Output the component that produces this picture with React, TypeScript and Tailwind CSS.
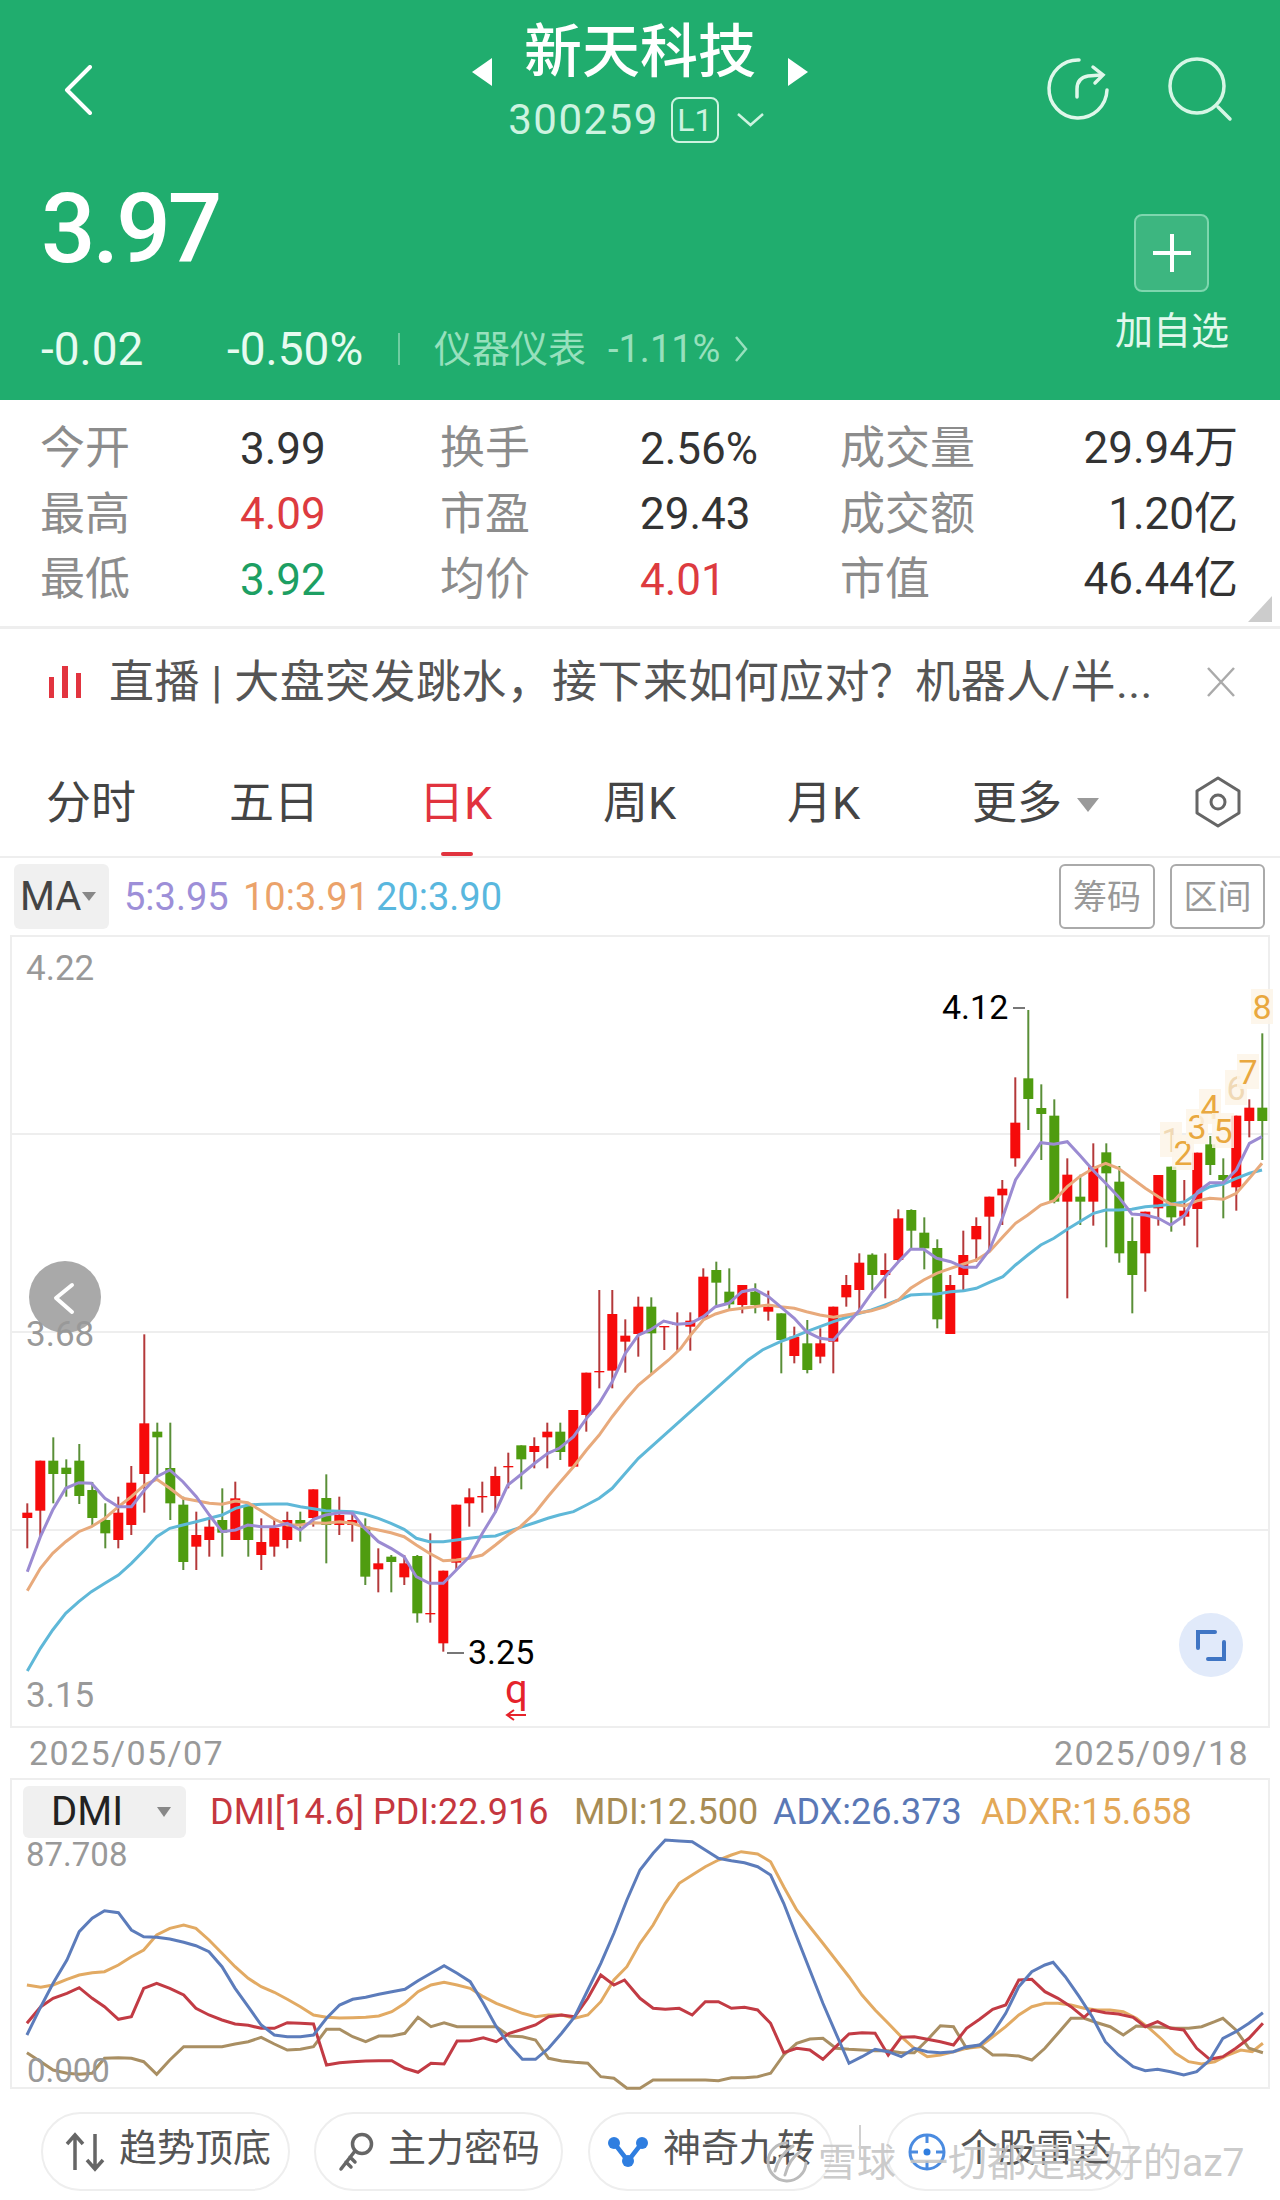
import React from "react";

type Pt = [number, number];
// [wick top, wick bottom, body top, body bottom, colour]
type Candle = [number, number, number, number, "r" | "g"];

const LEFT: Candle[] = [
  [790, 925, 818, 834, "r"], [662, 890, 662, 812, "r"], [592, 790, 662, 702, "g"], [658, 770, 683, 702, "g"],
  [612, 792, 662, 768, "g"], [726, 855, 750, 834, "g"], [790, 925, 840, 880, "g"], [770, 925, 818, 900, "r"],
  [678, 885, 728, 855, "r"], [283, 818, 550, 702, "r"], [548, 705, 575, 592, "g"], [548, 840, 684, 790, "g"],
  [770, 990, 794, 966, "g"], [815, 990, 885, 920, "r"], [835, 950, 860, 900, "r"], [745, 950, 840, 878, "g"],
  [725, 900, 775, 900, "r"], [790, 950, 798, 900, "g"], [835, 990, 906, 945, "r"], [835, 950, 864, 920, "r"],
  [815, 925, 840, 900, "r"], [815, 905, 840, 856, "g"], [748, 860, 748, 834, "r"], [703, 970, 774, 855, "g"],
  [770, 885, 825, 855, "r"], [815, 905, 840, 855, "r"], [835, 1035, 860, 1010, "g"], [925, 1057, 970, 988, "r"],
  [945, 1057, 950, 966, "g"], [945, 1035, 970, 1012, "r"], [945, 1148, 948, 1120, "g"], [880, 1148, 1119, 1123, "r"],
  [992, 1235, 992, 1210, "r"], [794, 990, 794, 968, "r"], [745, 860, 772, 790, "r"], [725, 818, 768, 772, "r"],
  [680, 818, 708, 768, "r"], [638, 745, 678, 682, "r"], [616, 748, 616, 658, "g"], [592, 685, 618, 636, "r"],
  [548, 685, 575, 592, "r"], [548, 660, 575, 636, "g"], [510, 680, 510, 680, "r"], [398, 575, 398, 525, "r"],
  [150, 445, 393, 397, "r"], [150, 445, 222, 392, "r"], [238, 398, 287, 305, "r"], [170, 350, 200, 282, "r"],
];

const RIGHT: Candle[] = [
  [1012, 1240, 1040, 1120, "g"], [1100, 1170, 1098, 1102, "r"], [1057, 1172, 1090, 1095, "r"], [1057, 1172, 1082, 1100, "r"],
  [925, 1075, 950, 1075, "r"], [905, 1040, 930, 968, "g"], [925, 1050, 995, 1033, "g"], [975, 1060, 975, 1035, "r"],
  [970, 1060, 995, 1035, "g"], [992, 1082, 1040, 1055, "r"], [1060, 1240, 1060, 1140, "g"], [1100, 1210, 1130, 1188, "r"],
  [1080, 1240, 1150, 1230, "g"], [1105, 1210, 1150, 1190, "r"], [1040, 1240, 1040, 1145, "r"], [945, 1040, 975, 1012, "r"],
  [880, 1060, 908, 990, "r"], [880, 990, 884, 945, "g"], [880, 1015, 930, 945, "r"], [748, 905, 775, 900, "r"],
  [748, 865, 750, 812, "g"], [772, 928, 818, 865, "g"], [838, 1105, 864, 1078, "g"], [945, 1122, 975, 1122, "r"],
  [812, 990, 885, 945, "r"], [772, 905, 798, 838, "r"], [710, 868, 710, 770, "r"], [660, 795, 686, 706, "r"],
  [352, 620, 488, 595, "r"], [150, 510, 355, 417, "g"], [373, 600, 444, 462, "g"], [418, 730, 467, 725, "g"],
  [595, 1015, 644, 725, "r"], [644, 795, 710, 725, "g"], [550, 797, 620, 725, "r"], [550, 862, 577, 640, "g"],
  [618, 908, 665, 880, "g"], [772, 1060, 843, 945, "g"], [755, 995, 755, 880, "r"], [645, 797, 645, 745, "r"],
  [620, 815, 620, 772, "g"], [660, 797, 752, 770, "r"], [578, 862, 578, 747, "r"], [528, 645, 553, 615, "g"],
  [595, 775, 645, 660, "g"], [467, 752, 467, 682, "r"], [418, 532, 443, 483, "r"], [220, 600, 443, 483, "g"],
];

const MA5_L: Pt[] = [[67,995],[99,890],[129,810],[161,745],[193,728],[224,730],[257,775],[290,800],[322,800],[354,750],[384,710],[416,690],[448,725],[481,770],[513,825],[544,875],[577,870],[607,855],[640,860],[672,860],[704,850],[736,870],[768,838],[798,825],[832,818],[864,820],[893,865],[927,905],[958,925],[990,950],[1020,1010],[1052,1030],[1086,1030],[1118,990],[1150,950],[1182,880],[1214,815],[1244,735],[1275,705],[1310,670],[1342,640],[1370,625],[1405,590],[1437,535],[1468,490],[1500,425],[1532,340],[1564,285]];
const MA5_R: Pt[] = [[25,1110],[58,1083],[90,1093],[124,1090],[155,1070],[185,1040],[217,1030],[250,995],[281,988],[315,1010],[344,1040],[378,1075],[408,1115],[441,1135],[474,1140],[506,1095],[538,1050],[567,1000],[601,950],[633,905],[663,868],[695,868],[727,895],[761,905],[793,922],[824,922],[856,870],[889,770],[920,660],[950,605],[982,548],[1014,553],[1047,545],[1077,585],[1111,632],[1141,670],[1172,710],[1205,762],[1238,765],[1270,775],[1300,795],[1335,765],[1366,695],[1396,668],[1429,668],[1461,630],[1493,550],[1524,530]];
const MA10_L: Pt[] = [[67,1052],[99,985],[129,940],[161,905],[193,875],[224,860],[257,835],[290,800],[322,770],[354,735],[384,718],[416,745],[448,775],[481,782],[513,790],[544,793],[577,783],[607,788],[640,812],[672,838],[704,855],[736,855],[768,848],[798,850],[832,845],[864,850],[893,862],[927,870],[958,878],[990,890],[1020,915],[1052,940],[1086,962],[1118,960],[1150,955],[1182,945],[1214,915],[1244,885],[1275,860],[1310,820],[1342,770],[1370,730],[1405,680],[1437,630],[1468,585],[1500,530],[1532,480],[1564,435]];
const MA10_R: Pt[] = [[70,1200],[100,1165],[124,1125],[155,1080],[185,1062],[217,1050],[250,1045],[281,1040],[315,1035],[344,1040],[378,1045],[408,1055],[441,1065],[474,1072],[506,1065],[538,1058],[567,1052],[601,1040],[633,1020],[663,985],[695,960],[727,940],[761,925],[793,912],[824,900],[856,875],[889,830],[920,790],[950,765],[982,735],[1014,722],[1047,680],[1077,650],[1111,625],[1141,610],[1172,625],[1205,655],[1238,685],[1270,710],[1300,732],[1335,738],[1366,722],[1396,715],[1429,718],[1461,700],[1493,655],[1524,610]];
const MA20_L: Pt[] = [[67,1293],[99,1225],[129,1170],[161,1120],[193,1085],[224,1055],[257,1030],[290,1005],[322,970],[354,930],[384,890],[416,865],[448,855],[481,845],[513,835],[544,825],[577,805],[607,795],[640,793],[672,792],[704,792],[736,800],[768,806],[798,812],[832,814],[864,815],[893,822],[927,835],[958,850],[990,868],[1020,895],[1052,905],[1086,905],[1118,900],[1150,895],[1182,890],[1214,888],[1244,875],[1275,862],[1310,848],[1342,835],[1370,825],[1405,815],[1437,795],[1468,775],[1500,745],[1532,700],[1564,655]];
const MA20_R: Pt[] = [[265,1200],[300,1170],[344,1145],[378,1130],[408,1115],[441,1100],[474,1085],[506,1072],[538,1060],[567,1050],[601,1035],[633,1020],[663,1005],[695,1003],[727,1002],[761,995],[793,992],[824,985],[856,967],[889,950],[920,915],[950,885],[982,855],[1014,835],[1047,808],[1077,785],[1111,760],[1141,750],[1172,750],[1205,748],[1238,740],[1270,737],[1300,733],[1335,725],[1366,700],[1396,680],[1429,672],[1461,655],[1493,640],[1524,630]];

const ADX: Pt[] = [[33,885],[50,800],[65,730],[82,660],[97,575],[113,535],[128,512],[145,518],[161,570],[176,590],[192,592],[208,597],[225,607],[240,617],[256,635],[272,680],[288,745],[304,800],[320,855],[336,885],[352,890],[368,890],[384,885],[400,835],[416,795],[432,778],[448,772],[464,763],[480,755],[496,748],[512,722],[528,700],[544,677],[560,700],[576,725],[592,790],[608,860],[624,915],[640,958],[656,958],[672,925],[688,880],[704,830],[720,750],[736,670],[752,580],[768,480],[784,390],[800,340],[815,300],[832,303],[848,305],[864,330],[880,355],[896,362],[912,368],[928,380],[944,405],[960,490],[976,590],[992,690],[1008,790],[1024,880],[1040,970],[1056,950],[1072,928],[1088,935],[1104,950],[1120,925],[1136,935],[1152,938],[1168,935],[1184,920],[1200,915],[1216,880],[1232,820],[1248,740],[1264,695],[1280,675],[1290,667],[1305,710],[1322,770],[1338,830],[1354,905],[1370,945],[1388,980],[1403,992],[1418,988],[1434,995],[1450,1005],[1466,995],[1482,960],[1498,895],[1514,875],[1530,850],[1547,818]];
const ADXR: Pt[] = [[33,735],[50,742],[65,735],[82,718],[97,705],[113,698],[128,695],[145,675],[161,650],[176,630],[192,585],[208,565],[225,555],[240,565],[256,600],[272,640],[288,680],[304,715],[320,740],[336,757],[352,778],[368,800],[384,825],[400,832],[416,834],[432,833],[448,832],[464,828],[480,815],[496,790],[512,755],[528,735],[544,727],[560,735],[576,745],[592,770],[608,790],[624,805],[640,820],[656,830],[672,825],[688,825],[704,835],[720,825],[736,785],[752,720],[768,680],[784,610],[800,555],[815,490],[832,430],[848,405],[864,380],[880,360],[896,345],[908,335],[928,342],[944,365],[960,440],[976,510],[992,560],[1008,610],[1024,660],[1040,710],[1056,765],[1072,810],[1088,850],[1104,890],[1120,925],[1136,950],[1152,945],[1168,935],[1184,925],[1200,920],[1216,890],[1232,860],[1248,825],[1264,800],[1280,790],[1296,790],[1312,795],[1328,805],[1344,810],[1360,810],[1376,815],[1392,835],[1408,865],[1424,900],[1440,940],[1456,965],[1472,972],[1488,965],[1504,945],[1520,930],[1534,935],[1547,910]];
const PDI: Pt[] = [[33,850],[50,800],[65,775],[82,760],[97,743],[113,775],[128,800],[145,838],[161,830],[176,745],[192,730],[208,745],[225,765],[240,805],[256,825],[272,840],[288,852],[304,856],[320,865],[336,865],[352,848],[368,850],[384,852],[400,975],[416,968],[432,965],[448,963],[464,962],[480,962],[496,985],[512,997],[528,970],[544,972],[560,903],[576,902],[592,893],[608,905],[624,880],[640,868],[656,855],[672,830],[688,825],[704,830],[720,775],[736,705],[752,735],[765,720],[784,775],[800,805],[815,808],[832,805],[848,825],[864,785],[880,785],[896,805],[912,802],[928,810],[944,850],[960,938],[976,925],[992,930],[1008,958],[1024,920],[1040,882],[1056,878],[1072,880],[1088,945],[1104,892],[1120,890],[1136,898],[1152,905],[1168,915],[1184,865],[1200,838],[1216,808],[1232,795],[1248,720],[1264,718],[1280,755],[1296,775],[1312,800],[1328,832],[1338,810],[1354,818],[1370,822],[1388,832],[1403,860],[1418,845],[1434,865],[1450,870],[1466,925],[1482,958],[1498,950],[1514,925],[1530,895],[1547,850]];
const MDI: Pt[] = [[33,938],[50,965],[65,990],[82,1000],[97,1003],[113,1000],[128,955],[145,953],[161,955],[176,965],[192,1003],[208,960],[225,920],[240,920],[256,920],[272,920],[288,912],[304,905],[320,892],[336,912],[352,930],[368,928],[384,920],[400,868],[416,868],[432,890],[448,905],[464,888],[480,888],[496,880],[512,832],[528,860],[544,848],[560,860],[576,860],[592,860],[608,860],[624,888],[640,890],[656,900],[672,955],[688,963],[704,967],[720,970],[736,1010],[752,1015],[768,1045],[784,1045],[800,1020],[815,1020],[832,1020],[848,1020],[864,1020],[880,1022],[896,1013],[912,1013],[928,1010],[944,1000],[960,945],[976,910],[992,897],[1008,895],[1024,925],[1040,928],[1056,930],[1072,932],[1088,932],[1104,938],[1120,938],[1136,900],[1152,857],[1168,860],[1184,925],[1200,915],[1216,945],[1232,945],[1248,948],[1264,960],[1280,925],[1296,880],[1312,835],[1328,835],[1344,848],[1360,860],[1376,885],[1392,858],[1408,860],[1424,862],[1440,865],[1456,865],[1472,860],[1488,845],[1498,835],[1514,870],[1530,925],[1547,938]];

const fromLeft = ([x, y]: Pt): Pt => [x / 2.45, 1240 + y / 3];
const fromRight = ([x, y]: Pt): Pt => [640 + x / 2.45, 960 + y / 3];
const fromDmi = ([x, y]: Pt): Pt => [x / 1.225, 1740 + y / 3];
const toPoints = (pts: Pt[]) => pts.map(([x, y]) => `${x.toFixed(1)},${y.toFixed(1)}`).join(" ");

const CANDLES = [
  ...LEFT.map((c) => [c[0] / 3 + 1240, c[1] / 3 + 1240, c[2] / 3 + 1240, c[3] / 3 + 1240, c[4]] as const),
  ...RIGHT.map((c) => [c[0] / 3 + 960, c[1] / 3 + 960, c[2] / 3 + 960, c[3] / 3 + 960, c[4]] as const),
];

const NINE: { n: string; x: number; y: number; faded?: boolean }[] = [
  { n: "1", x: 1171, y: 1140, faded: true },
  { n: "2", x: 1183, y: 1153 },
  { n: "3", x: 1197, y: 1127 },
  { n: "4", x: 1210, y: 1107 },
  { n: "5", x: 1223, y: 1131 },
  { n: "6", x: 1236, y: 1088, faded: true },
  { n: "7", x: 1248, y: 1072 },
  { n: "8", x: 1262, y: 1007 },
];

const STATS = [
  ["今开", "3.99", "", "换手", "2.56%", "", "成交量", "29.94万"],
  ["最高", "4.09", "text-[#dd3b3f]", "市盈", "29.43", "", "成交额", "1.20亿"],
  ["最低", "3.92", "text-[#1d9f63]", "均价", "4.01", "text-[#dd3b3f]", "市值", "46.44亿"],
];

function PriceChart() {
  return (
    <svg viewBox="12 937 1256 789" className="block h-[789px] w-[1256px] overflow-visible">
      {[1134, 1332, 1530].map((y) => (
        <line key={y} x1={12} x2={1268} y1={y} y2={y} stroke="#eeeeee" strokeWidth={2} />
      ))}
      {CANDLES.map(([wt, wb, bt, bb, c], i) => {
        const x = 27.3 + i * 13;
        return (
          <g key={i}>
            <line x1={x} x2={x} y1={wt} y2={wb} stroke={c === "r" ? "#b4393a" : "#5a8f38"} strokeWidth={2} />
            <rect x={x - 5} y={bt} width={10} height={Math.max(bb - bt, 1)} fill={c === "r" ? "#f60b0b" : "#4f9c10"} />
          </g>
        );
      })}
      <polyline points={toPoints([...MA20_L.map(fromLeft), ...MA20_R.map(fromRight)])} fill="none" stroke="#5fb8d8" strokeWidth={3} />
      <polyline points={toPoints([...MA10_L.map(fromLeft), ...MA10_R.map(fromRight)])} fill="none" stroke="#e8aa7c" strokeWidth={3} />
      <polyline points={toPoints([...MA5_L.map(fromLeft), ...MA5_R.map(fromRight)])} fill="none" stroke="#9b8bd2" strokeWidth={3} />

      {/* back button sits under the axis label */}
      <circle cx={65} cy={1297} r={36} fill="#a9a9a9" />
      <path d="M72 1285 L56 1298 L72 1312" fill="none" stroke="#ffffff" strokeWidth={4} strokeLinecap="round" strokeLinejoin="round" />

      <g className="fill-[#999999] text-[35px]">
        <text x={26} y={980}>4.22</text>
        <text x={26} y={1346}>3.68</text>
        <text x={26} y={1707}>3.15</text>
      </g>
      <g className="fill-black text-[34px]">
        <text x={942} y={1019}>4.12</text>
        <text x={468} y={1664}>3.25</text>
      </g>
      <line x1={1013} x2={1025} y1={1008} y2={1008} stroke="#777777" strokeWidth={2} />
      <line x1={447} x2={464} y1={1653} y2={1653} stroke="#777777" strokeWidth={2} />

      <text x={505} y={1703} className="fill-[#e5232b] text-[40px]">q</text>
      <path d="M526 1715 H508 M514 1710 L507 1715 L514 1720" fill="none" stroke="#e5232b" strokeWidth={2} />

      {NINE.map((d) => (
        <g key={d.n}>
          <rect x={d.x - 11} y={d.y - 18} width={22} height={35} fill="#fdf4e8" opacity={0.85} />
          <text x={d.x} y={d.y + 12} textAnchor="middle" className={d.faded ? "fill-[#f0d9b5] text-[34px]" : "fill-[#e9a83f] text-[34px]"}>
            {d.n}
          </text>
        </g>
      ))}

      <circle cx={1211} cy={1645} r={32} fill="#e1eafa" />
      <path d="M1198 1648 V1632 H1215 M1224 1642 V1659 H1208" fill="none" stroke="#3f75c4" strokeWidth={4} strokeLinecap="round" />
    </svg>
  );
}

function DmiChart() {
  return (
    <svg viewBox="12 1840 1256 247" className="block h-[247px] w-[1256px] overflow-visible">
      <polyline points={toPoints(ADXR.map(fromDmi))} fill="none" stroke="#e2aa63" strokeWidth={3} />
      <polyline points={toPoints(MDI.map(fromDmi))} fill="none" stroke="#a98f63" strokeWidth={3} />
      <polyline points={toPoints(PDI.map(fromDmi))} fill="none" stroke="#c23b44" strokeWidth={3} />
      <polyline points={toPoints(ADX.map(fromDmi))} fill="none" stroke="#5c7cbb" strokeWidth={3} />
      <g className="fill-[#999999] text-[33px]">
        <text x={26} y={1866}>87.708</text>
        <text x={27} y={2082}>0.000</text>
      </g>
    </svg>
  );
}

function Pill({ box, icon, label }: { box: string; icon: React.ReactNode; label: string }) {
  return (
    <div className={`flex h-[79px] items-center rounded-[40px] border-2 border-[#eeeeee] bg-white ${box}`}>
      {icon}
      <span className="mb-[8px] ml-[14px] text-[38px] leading-none text-[#555555]">{label}</span>
    </div>
  );
}

export default function App() {
  return (
    <div className="relative h-[2200px] w-[1280px] overflow-hidden bg-white font-['Roboto','Noto_Sans_CJK_SC',sans-serif]">
      {/* header */}
      <div className="h-[400px] bg-[#20ad6e]">
        <div className="grid grid-cols-[472px_336px_1fr]">
          <div className="pl-[64px] pt-[65px]">
            <svg width="28" height="50" viewBox="0 0 28 50" fill="none">
              <path d="M26 2 L3 25 L26 48" stroke="#ffffff" strokeWidth={4} strokeLinecap="round" strokeLinejoin="round" />
            </svg>
          </div>
          <div className="flex flex-col items-center pt-[24px]">
            <div className="flex h-[56px] w-full items-start justify-between">
              <svg className="mt-[34px]" width="20" height="28" viewBox="0 0 20 28"><path d="M20 0 V28 L0 14 Z" fill="#ffffff" /></svg>
              <span className="text-[58px] font-medium leading-[56px] text-white">新天科技</span>
              <svg className="mt-[34px]" width="20" height="28" viewBox="0 0 20 28"><path d="M0 0 V28 L20 14 Z" fill="#ffffff" /></svg>
            </div>
            <div className="mr-[8px] mt-[17px] flex items-center">
              <span className="text-[42px] leading-[46px] tracking-[1.5px] text-[#cdf3e0]">300259</span>
              <span className="ml-[12px] flex h-[46px] w-[48px] items-center justify-center rounded-[8px] border-2 border-[#cdf3e0] text-[32px] leading-none text-[#cdf3e0]">L1</span>
              <svg className="ml-[18px]" width="27" height="14" viewBox="0 0 27 14" fill="none"><path d="M1 1 L13.5 12 L26 1" stroke="#cdf3e0" strokeWidth={2.5} /></svg>
            </div>
          </div>
          <div className="flex justify-end gap-[57px] pr-[47px] pt-[56px]">
            <svg width="64" height="66" viewBox="0 0 64 66" fill="none" stroke="#dff7ea" strokeWidth={3.5} strokeLinecap="round">
              <path d="M33 4 A29 29 0 1 0 61 34" />
              <path d="M31 41 V33 Q31 22 42 20 L55 19" />
              <path d="M47 11 L57 19 L49 27" />
            </svg>
            <svg width="66" height="66" viewBox="0 0 66 66" fill="none" stroke="#d5f6e5" strokeWidth={3.5} strokeLinecap="round">
              <circle cx="30" cy="30" r="27" />
              <path d="M51 51 L63 63" />
            </svg>
          </div>
        </div>

        <div className="flex justify-between pl-[41px] pr-[51px]">
          <div>
            <div className="mt-[36px] text-[96px] font-medium leading-[100px] tracking-[-3px] text-white">3.97</div>
            <div className="mt-[50px] flex items-center">
              <span className="w-[186px] text-[46px] leading-[40px] text-[#e6fbf0]">-0.02</span>
              <span className="w-[171px] text-[46px] leading-[40px] text-[#e6fbf0]">-0.50%</span>
              <span className="mr-[34px] h-[32px] w-[2px] bg-[#6fcda1]" />
              <span className="w-[174px] text-[38px] leading-[40px] text-[#97e0bd]">仪器仪表</span>
              <span className="text-[38px] leading-[40px] text-[#97e0bd]">-1.11%</span>
              <svg className="ml-[14px]" width="14" height="28" viewBox="0 0 14 28" fill="none"><path d="M2 2 L12 14 L2 26" stroke="#97e0bd" strokeWidth={2.5} /></svg>
            </div>
          </div>
          <div className="mt-[71px] flex flex-col items-center">
            <div className="flex h-[78px] w-[75px] items-center justify-center rounded-[8px] border-2 border-[#7ed6ae] bg-[#3db680]">
              <svg width="42" height="42" viewBox="0 0 42 42"><path d="M21 2 V40 M2 21 H40" stroke="#ffffff" strokeWidth={4} /></svg>
            </div>
            <div className="mt-[20px] text-[38px] leading-[38px] text-[#e0f8ec]">加自选</div>
          </div>
        </div>
      </div>

      {/* quote stats */}
      <div className="relative h-[229px] border-b-[3px] border-[#eeeeee] pl-[40px] pr-[42px] pt-[16px]">
        {STATS.map((row) => (
          <div key={row[0]} className="grid h-[65.5px] grid-cols-[200px_200px_200px_200px_1fr] items-center text-[44px] leading-none">
            <span className="text-[45px] text-[#8c8c8c]">{row[0]}</span>
            <span className={row[2] || "text-[#333333]"}>{row[1]}</span>
            <span className="text-[45px] text-[#8c8c8c]">{row[3]}</span>
            <span className={row[5] || "text-[#333333]"}>{row[4]}</span>
            <span className="flex justify-between">
              <span className="text-[45px] text-[#8c8c8c]">{row[6]}</span>
              <span className="text-[#333333]">{row[7]}</span>
            </span>
          </div>
        ))}
        <svg className="absolute bottom-[4px] right-[8px]" width="24" height="26" viewBox="0 0 24 26"><path d="M24 0 V26 H0 Z" fill="#cccccc" /></svg>
      </div>

      {/* ticker */}
      <div className="flex h-[106px] items-center pl-[48px]">
        <svg width="34" height="32" viewBox="0 0 34 32"><path d="M1 11 H6 V32 H1 Z M14 0 H20 V32 H14 Z M28 7 H33 V32 H28 Z" fill="#e2343f" /></svg>
        <span className="ml-[27px] w-[1045px] whitespace-nowrap text-[45px] leading-none tracking-[0.4px] text-[#555555]">直播 | 大盘突发跳水，接下来如何应对？机器人/半...</span>
        <svg className="ml-[52px]" width="30" height="30" viewBox="0 0 30 30"><path d="M2 1 L28 29 M28 1 L2 29" stroke="#aaaaaa" strokeWidth={2.5} /></svg>
      </div>

      {/* period tabs */}
      <div className="flex h-[123px] border-b-[2px] border-[#eeeeee] pl-[46px] pt-[47px] text-[45px] leading-[44px] text-[#444444]">
        <span className="w-[183px]">分时</span>
        <span className="w-[190px]">五日</span>
        <span className="flex w-[184px] flex-col text-[#e1333e]">
          日K
          <span className="ml-[22px] mt-[26px] h-[5px] w-[32px] rounded-sm bg-[#e1333e]" />
        </span>
        <span className="w-[184px]">周K</span>
        <span className="w-[185px]">月K</span>
        <span className="flex items-start">
          更多
          <svg className="ml-[15px] mt-[16px]" width="22" height="14" viewBox="0 0 22 14"><path d="M0 0 H22 L11 14 Z" fill="#9a9a9a" /></svg>
        </span>
        <svg className="ml-[95px] -mt-[6px]" width="48" height="52" viewBox="0 0 48 52" fill="none" stroke="#666666" strokeWidth={3} strokeLinejoin="round">
          <path d="M24 2 L45 15 V37 L24 50 L3 37 V15 Z" />
          <circle cx="24" cy="26" r="7" />
        </svg>
      </div>

      {/* MA row */}
      <div className="flex h-[77px] items-center pl-[14px] pr-[15px]">
        <div className="flex h-[65px] w-[95px] items-center rounded-[6px] bg-[#f0f0f0] pl-[6px] text-[40px] leading-none text-[#444444]">
          MA
          <svg className="ml-[1px]" width="14" height="9" viewBox="0 0 14 9"><path d="M0 0 H14 L7 9 Z" fill="#888888" /></svg>
        </div>
        <span className="ml-[15px] w-[119px] text-[38px] leading-none text-[#9d8fd8]">5:3.95</span>
        <span className="w-[133px] text-[38px] leading-none text-[#eba26a]">10:3.91</span>
        <span className="text-[38px] leading-none text-[#59b7de]">20:3.90</span>
        <div className="ml-auto flex gap-[15px]">
          <span className="flex h-[65px] w-[96px] items-center justify-center rounded-[6px] border-2 border-[#aaaaaa] text-[34px] leading-none text-[#999999]">筹码</span>
          <span className="flex h-[65px] w-[95px] items-center justify-center rounded-[6px] border-2 border-[#aaaaaa] text-[34px] leading-none text-[#999999]">区间</span>
        </div>
      </div>

      {/* candlestick panel */}
      <div className="ml-[10px] w-[1260px] border-2 border-[#eeeeee]">
        <PriceChart />
      </div>

      <div className="flex h-[50px] items-center justify-between pl-[29px] pr-[31px] text-[34px] leading-none tracking-[1.4px] text-[#999999]">
        <span>2025/05/07</span>
        <span>2025/09/18</span>
      </div>

      {/* DMI panel */}
      <div className="ml-[10px] w-[1260px] border-2 border-[#eeeeee]">
        <div className="flex h-[60px] items-start pl-[11px] pt-[6px]">
          <div className="flex h-[52px] w-[163px] items-center rounded-[6px] bg-[#f0f0f0] pl-[28px] text-[40px] leading-none text-[#222222]">
            DMI
            <svg className="ml-[34px]" width="14" height="10" viewBox="0 0 14 10"><path d="M0 0 H14 L7 10 Z" fill="#888888" /></svg>
          </div>
          <div className="ml-[24px] flex h-[52px] items-center text-[36px] leading-none">
            <span className="w-[364px] text-[#c5373f]">DMI[14.6] PDI:22.916</span>
            <span className="w-[199px] text-[#a78c55]">MDI:12.500</span>
            <span className="w-[208px] text-[#5a78b6]">ADX:26.373</span>
            <span className="text-[#e3a857]">ADXR:15.658</span>
          </div>
        </div>
        <DmiChart />
      </div>

      {/* feature pills */}
      <div className="mt-[23px] flex pl-[41px]">
        <Pill
          box="w-[249px] pl-[22px]"
          label="趋势顶底"
          icon={
            <svg width="40" height="40" viewBox="0 0 40 40" fill="none" stroke="#666666" strokeWidth={3.5}>
              <path d="M10 38 V3 M2 12 L10 3 L18 12" />
              <path d="M30 2 V37 M22 28 L30 37 L38 28" />
            </svg>
          }
        />
        <div className="ml-[24px]">
          <Pill
            box="w-[249px] pl-[22px]"
            label="主力密码"
            icon={
              <svg width="36" height="40" viewBox="0 0 36 40" fill="none" stroke="#666666" strokeWidth={3.5} strokeLinecap="round">
                <circle cx="24" cy="12" r="9.5" />
                <path d="M17 19 L3 37 M8 30 L13 35 M12 25 L17 30" />
              </svg>
            }
          />
        </div>
        <div className="ml-[25px]">
          <Pill
            box="w-[245px] pl-[17px]"
            label="神奇九转"
            icon={
              <svg width="42" height="34" viewBox="0 0 42 34" fill="none">
                <path d="M7 8 L21 26 L35 8" stroke="#2f7ee0" strokeWidth={4.5} />
                <circle cx="7" cy="8" r="6" fill="#2f7ee0" />
                <circle cx="35" cy="8" r="6" fill="#2f7ee0" />
                <circle cx="21" cy="26" r="6" fill="#2f7ee0" />
              </svg>
            }
          />
        </div>
        <div className="ml-[53px]">
          <Pill
            box="w-[245px] pl-[20px]"
            label="个股雷达"
            icon={
              <svg width="38" height="38" viewBox="0 0 38 38" fill="none" stroke="#4a8be0" strokeWidth={3}>
                <circle cx="19" cy="19" r="17" />
                <path d="M19 2 V10 M19 28 V36 M2 19 H10 M28 19 H36" />
                <circle cx="19" cy="19" r="3.5" fill="#2f7ee0" stroke="none" />
              </svg>
            }
          />
        </div>
      </div>

      {/* watermark */}
      <div className="absolute left-[765px] top-[2125px] flex h-[60px] w-[490px] items-end whitespace-nowrap text-[39px] leading-[44px] text-[#c4c4c4]/90">
        <svg className="mb-[2px] shrink-0" width="44" height="42" viewBox="0 0 44 42" fill="none" stroke="#bbbbbb" strokeWidth={3} strokeLinecap="round">
          <path d="M22 2 A19 19 0 1 0 41 22" />
          <path d="M28 5 Q14 14 10 30" />
          <path d="M36 10 Q24 18 20 34" />
        </svg>
        <span className="ml-[9px] w-[91px] shrink-0">雪球</span>
        <span className="shrink-0">一切都是最好的az7</span>
      </div>
      <span className="absolute left-[859px] top-[2125px] h-[35px] w-[2px] bg-[#d0d0d0]" />
    </div>
  );
}
